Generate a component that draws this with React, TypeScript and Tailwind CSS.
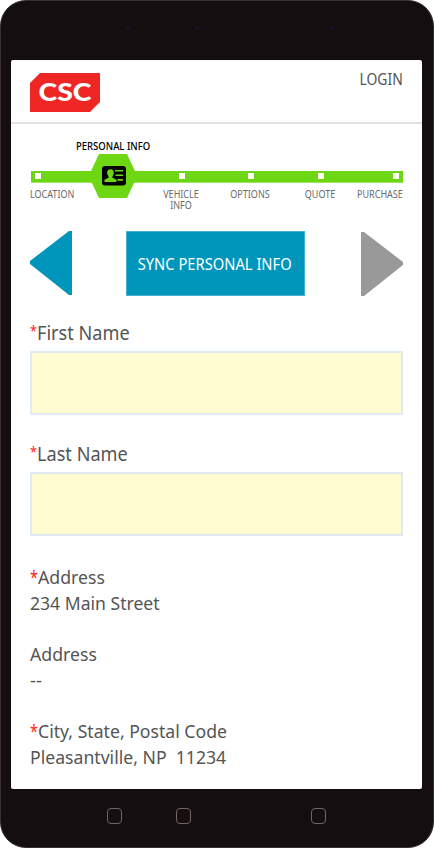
import React from "react";

const steps = [
  { label: "LOCATION", box: "left-0 text-left origin-left", dot: "left-1" },
  { label: "VEHICLE INFO", box: "left-[127px] w-12 text-center origin-center", dot: "left-[148px]" },
  { label: "OPTIONS", box: "left-[190px] w-[60px] text-center origin-center", dot: "left-[217px]" },
  { label: "QUOTE", box: "left-[260px] w-[60px] text-center origin-center", dot: "left-[287px]" },
  { label: "PURCHASE", box: "right-0 text-right origin-right", dot: "left-[362px]" },
];

function Progress() {
  return (
    <div className="relative mt-[29px] h-[60px]">
      <div className="absolute -top-[13px] left-[45.5px] origin-left scale-x-[0.95] whitespace-nowrap text-[10px] font-medium leading-3 text-black">
        PERSONAL INFO
      </div>
      <div className="absolute left-px right-0 top-[18px] h-[11px] bg-[#6dd714]" />
      <div className="absolute left-px right-0 top-[29px] h-px bg-[#9be45d]" />
      {steps.map((s) => (
        <React.Fragment key={s.label}>
          <i className={`absolute top-5 ml-px size-[6px] bg-white ${s.dot}`} />
          <div className={`absolute top-9 scale-x-[0.9] text-[10px] leading-[11px] text-[#6b6b6b] ${s.box}`}>{s.label}</div>
        </React.Fragment>
      ))}
      <svg className="absolute left-[61px] top-px" width="44" height="44" viewBox="0 0 44 44">
        <path d="M8 0h28l8 17v10l-8 17H8L0 27V17z" fill="#6dd714" />
        <rect x="11" y="12" width="24" height="19.5" rx="3" fill="#000" />
        <path d="M13.5 28v-2.2l4-2v-1.6c-2-2.4-2-7 2-7s4 4.6 2 7v1.6l4 2V28z" fill="#6dd714" />
        <path d="M24 16h8v1.6h-8zM24.5 20.5H32V22h-7.500zM26.500 25H32v1.700h-5.500z" fill="#6dd714" />
      </svg>
    </div>
  );
}

function Field({ label, width }: { label: string; width: string }) {
  return (
    <label className="block h-[121px]">
      <span className="flex h-[28px] items-start text-[19.5px] leading-[20px]">
        <span className="w-[6.5px] origin-left scale-x-[0.85] text-[15px] leading-[15px] text-[#f22]">*</span>
        <span className={`origin-left whitespace-nowrap ${width}`}>{label}</span>
      </span>
      <input aria-label={label} className="block h-16 w-full border-2 border-[#dfeaf2] bg-[#fffcd2] outline-none" />
    </label>
  );
}

function Star() {
  return <span className="w-2 origin-left scale-x-[0.78] text-[#f22]">*</span>;
}

export default function App() {
  return (
    <div className="h-[850px] w-[434px] bg-white font-['Noto_Sans',sans-serif] text-[#555]">
      <div className="flex h-[848px] w-full flex-col overflow-hidden rounded-[26px] border border-[#36312f] bg-[#150e10] px-[10px]">
        <div className="flex h-[59px] shrink-0 pl-[115px] pt-[25px]">
          <i className="size-1 rounded-full bg-[#15132c]" />
          <i className="ml-[65px] size-1 rounded-full bg-[#15132c]" />
          <i className="ml-[131px] size-1 rounded-full bg-[#15132c]" />
        </div>
        <main className="h-[729px] w-[411px] shrink-0 rounded-[2px] bg-white">
          <header className="flex h-16 items-start justify-between border-b-2 border-[#e2e2e2] pl-[19px] pr-[19px] pt-3">
            <svg className="mt-px" width="71" height="39" viewBox="0 0 71 39">
              <path d="M10 0h60v29l-10 10H0V10z" fill="#ee2724" />
              <text x="8.5" y="28" textLength="53" lengthAdjust="spacingAndGlyphs" fontFamily="Lato" fontWeight="900" fontSize="25" fill="#fff">CSC</text>
            </svg>
            <span className="-mt-[5px] origin-right scale-x-[0.87] text-base leading-6">LOGIN</span>
          </header>
          <div className="pl-[19px] pr-[19px]">
            <Progress />
            <div className="mt-[18px] flex h-[65px] items-start justify-between">
              <svg width="42" height="64" viewBox="0 0 42 64"><path d="M42 0v64h-3L0 33v-3L39 0z" fill="#0096bc" /></svg>
              <button className="-ml-[3px] flex h-[65px] w-[179px] items-center justify-center border border-[#45b0d0] bg-[#0096bc] text-base text-white">
                <span className="scale-x-[0.92] whitespace-nowrap">SYNC PERSONAL INFO</span>
              </button>
              <svg className="mt-px" width="42" height="64" viewBox="0 0 42 64"><path d="M0 0v64h3l39-31v-3L3 0z" fill="#999" /></svg>
            </div>
            <div className="mt-[27px]">
              <Field label="First Name" width="scale-x-[0.93]" />
              <Field label="Last Name" width="scale-x-[0.93]" />
            </div>
            <div className="-mt-px text-[18.5px] leading-[25.7px]">
              <p className="flex"><Star /><span className="origin-left scale-x-[0.955]">Address</span></p>
              <p className="w-max origin-left scale-x-[0.95]">234 Main Street</p>
              <br />
              <p className="w-max origin-left scale-x-[0.955]">Address</p>
              <p className="w-max origin-left">--</p>
              <br />
              <p className="flex"><Star /><span className="origin-left scale-x-[0.953] whitespace-nowrap">City, State, Postal Code</span></p>
              <p className="w-max origin-left scale-x-[0.953] whitespace-pre">Pleasantville, NP  11234</p>
            </div>
          </div>
        </main>
        <nav className="flex pl-24 pt-[19px]">
          <i className="h-4 w-[15px] rounded-[4px] border border-[#746463]" />
          <i className="ml-[54px] h-4 w-[15px] rounded-[4px] border border-[#746463]" />
          <i className="ml-[120px] h-4 w-[15px] rounded-[4px] border border-[#746463]" />
        </nav>
      </div>
    </div>
  );
}
